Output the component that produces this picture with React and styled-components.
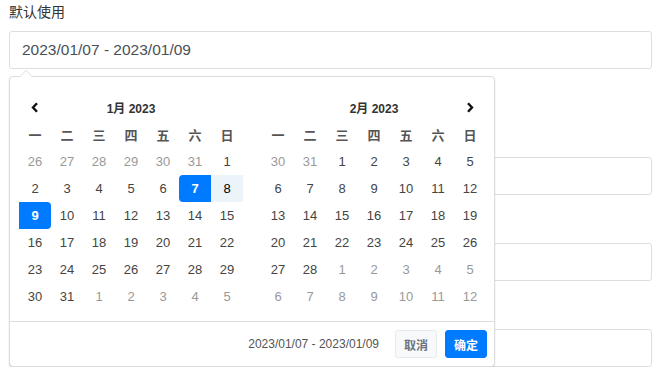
import styled, { createGlobalStyle } from 'styled-components';

const GlobalStyle = createGlobalStyle`
  body {
    margin: 0;
    background: #fff;
    font-family: "Liberation Sans", "Noto Sans CJK SC", sans-serif;
  }
`;

const WEEKDAYS = ['一', '二', '三', '四', '五', '六', '日'];

const START = new Date(2023, 0, 7).getTime();
const END = new Date(2023, 0, 9).getTime();

// 42 cells, Monday first
const buildMonth = (year, month) => {
  const first = new Date(year, month, 1);
  const lead = (first.getDay() + 6) % 7;
  const cells = [];
  for (let i = 0; i < 42; i++) {
    const d = new Date(year, month, 1 - lead + i);
    const t = d.getTime();
    let state = d.getMonth() !== month ? 'off' : 'normal';
    if (state !== 'off') {
      if (t === START) state = 'start';
      else if (t === END) state = 'end';
      else if (t > START && t < END) state = 'range';
    }
    cells.push({ key: i, day: d.getDate(), state });
  }
  return cells;
};

const Chevron = ({ dir }) => (
  <svg width="8" height="11" viewBox="0 0 8 11">
    <path
      d={dir === 'left' ? 'M6 1.2 L2 5.5 L6 9.8' : 'M2 1.2 L6 5.5 L2 9.8'}
      fill="none"
      stroke="#111"
      strokeWidth="2.4"
    />
  </svg>
);

const Calendar = ({ year, month, prev, next }) => (
  <CalGrid>
    <HeadCell>{prev && <Chevron dir="left" />}</HeadCell>
    <Title>{month + 1}月 {year}</Title>
    <HeadCell>{next && <Chevron dir="right" />}</HeadCell>
    {WEEKDAYS.map((w) => (
      <WeekCell key={w}>{w}</WeekCell>
    ))}
    {buildMonth(year, month).map((c) => (
      <Day key={c.key} $state={c.state}>{c.day}</Day>
    ))}
  </CalGrid>
);

const App = () => {
  return (
    <>
      <GlobalStyle />
      <Page>
        <Field $gap={59}>
          <Label>默认使用</Label>
          <Input>2023/01/07 - 2023/01/09</Input>
        </Field>
        {/* the labels of these fields sit under the open picker */}
        <Field $gap={19}>
          <Label />
          <Input />
        </Field>
        <Field $gap={19}>
          <Label />
          <Input />
        </Field>
        <Field $gap={0}>
          <Label />
          <Input />
        </Field>

        <Picker>
          <Calendars>
            <Calendar year={2023} month={0} prev />
            <Calendar year={2023} month={1} next />
          </Calendars>
          <Footer>
            <Selected>2023/01/07 - 2023/01/09</Selected>
            <Button>取消</Button>
            <Button $primary>确定</Button>
          </Footer>
        </Picker>
      </Page>
    </>
  );
};

export default App;

const Page = styled.div`
  position: relative;
  padding: 2px 9px 0 9px;
`;

const Field = styled.div`
  margin-bottom: ${(p) => p.$gap}px;
`;

const Label = styled.div`
  font-size: 14px;
  line-height: 21px;
  height: 21px;
  color: #333;
  margin-bottom: 8px;
`;

const Input = styled.div`
  box-sizing: border-box;
  height: 38px;
  border: 1px solid #dedede;
  border-radius: 3px;
  padding: 0 12px;
  display: flex;
  align-items: center;
  font-size: 15.5px;
  color: #495057;
`;

const Picker = styled.div`
  position: absolute;
  left: 9px;
  top: 76px;
  width: 486px;
  box-sizing: border-box;
  background: #fff;
  border: 1px solid #ddd;
  border-radius: 4px;
  box-shadow: 0 1px 2px rgba(0, 0, 0, 0.12);

  &::before {
    content: '';
    position: absolute;
    top: -7px;
    left: 9px;
    border-left: 7px solid transparent;
    border-right: 7px solid transparent;
    border-bottom: 7px solid #ddd;
  }
  &::after {
    content: '';
    position: absolute;
    top: -6px;
    left: 10px;
    border-left: 6px solid transparent;
    border-right: 6px solid transparent;
    border-bottom: 6px solid #fff;
  }
`;

const Calendars = styled.div`
  display: flex;
  gap: 19px;
  padding: 17px 8px 11px 9px;
`;

const CalGrid = styled.div`
  display: grid;
  grid-template-columns: repeat(7, 32px);
  grid-auto-rows: 27px;
`;

const HeadCell = styled.div`
  display: flex;
  align-items: center;
  justify-content: center;
`;

const Title = styled.div`
  grid-column: span 5;
  display: flex;
  align-items: center;
  justify-content: center;
  font-size: 12px;
  font-weight: bold;
  color: #333;
`;

const WeekCell = styled.div`
  display: flex;
  align-items: center;
  justify-content: center;
  font-size: 13px;
  font-weight: bold;
  color: #555;
`;

const Day = styled.div`
  display: flex;
  align-items: center;
  justify-content: center;
  font-size: 13px;
  color: ${(p) =>
    p.$state === 'off' ? '#999' : p.$state === 'start' || p.$state === 'end' ? '#fff' : p.$state === 'range' ? '#000' : '#444'};
  font-weight: ${(p) => (p.$state === 'start' || p.$state === 'end' ? 'bold' : 'normal')};
  background: ${(p) =>
    p.$state === 'start' || p.$state === 'end' ? '#007bff' : p.$state === 'range' ? '#ebf4f8' : 'transparent'};
  border-radius: ${(p) => (p.$state === 'start' ? '4px 0 0 4px' : p.$state === 'end' ? '0 4px 4px 0' : '0')};
`;

const Footer = styled.div`
  height: 44px;
  border-top: 1px solid #ddd;
  display: flex;
  align-items: center;
  justify-content: flex-end;
  gap: 8px;
  padding: 0 7px;
`;

const Selected = styled.span`
  font-size: 12px;
  color: #555;
  margin-right: 8px;
`;

const Button = styled.button`
  box-sizing: border-box;
  width: 42px;
  height: 28px;
  padding: 0;
  font-family: inherit;
  font-size: 12px;
  font-weight: bold;
  border-radius: 3px;
  border: 1px solid ${(p) => (p.$primary ? '#007bff' : '#e6e8ea')};
  background: ${(p) => (p.$primary ? '#007bff' : '#f8f9fa')};
  color: ${(p) => (p.$primary ? '#fff' : '#6c757d')};
`;
